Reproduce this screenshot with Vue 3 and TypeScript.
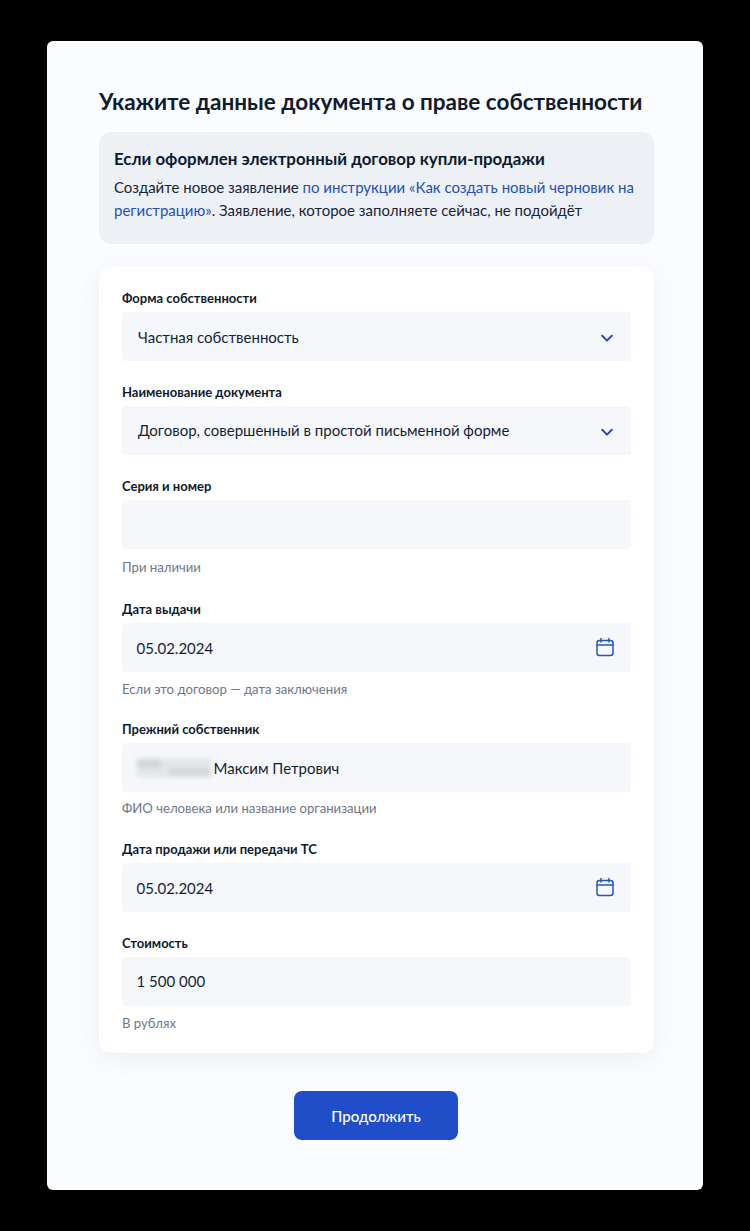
<script setup lang="ts">
interface Field {
  label: string
  value?: string
  hint?: string
  icon?: 'chevron' | 'calendar'
  masked?: boolean
}

const fields: Field[] = [
  { label: 'Форма собственности', value: 'Частная собственность', icon: 'chevron' },
  { label: 'Наименование документа', value: 'Договор, совершенный в простой письменной форме', icon: 'chevron' },
  { label: 'Серия и номер', hint: 'При наличии' },
  { label: 'Дата выдачи', value: '05.02.2024', hint: 'Если это договор — дата заключения', icon: 'calendar' },
  { label: 'Прежний собственник', value: 'Максим Петрович', hint: 'ФИО человека или название организации', masked: true },
  { label: 'Дата продажи или передачи ТС', value: '05.02.2024', icon: 'calendar' },
  { label: 'Стоимость', value: '1 500 000', hint: 'В рублях' },
]
</script>

<template>
  <div class="page">
    <main class="panel">
      <h1 class="title">Укажите данные документа о праве собственности</h1>
      <section class="notice">
        <h2 class="notice-title">Если оформлен электронный договор купли-продажи</h2>
        <p class="notice-text">
          Создайте новое заявление <a class="link">по инструкции «Как создать новый черновик на регистрацию»</a>. Заявление, которое заполняете сейчас, не подойдёт
        </p>
      </section>
      <section class="card">
        <div v-for="f in fields" :key="f.label" class="field">
          <div class="label">{{ f.label }}</div>
          <div class="input" :class="{ select: f.icon === 'chevron' }">
            <span v-if="f.masked" class="mask"></span>
            <span class="value">{{ f.value }}</span>
            <svg v-if="f.icon === 'chevron'" class="chevron" width="14" height="14" viewBox="0 0 14 14" fill="none">
              <path d="M2.2 4.8 7 9.6l4.8-4.8" stroke="#1f4bb4" stroke-width="2" stroke-linecap="round" stroke-linejoin="round" />
            </svg>
            <svg v-if="f.icon === 'calendar'" class="calendar" width="20" height="20" viewBox="0 0 20 20" fill="none">
              <rect x="2" y="3.5" width="16" height="15" rx="2.5" stroke="#2a56b8" stroke-width="1.5" />
              <path d="M2 8h16M6 1.5v3.5M14 1.5v3.5" stroke="#2a56b8" stroke-width="1.5" stroke-linecap="round" />
            </svg>
          </div>
          <div v-if="f.hint" class="hint">{{ f.hint }}</div>
        </div>
      </section>
      <div class="actions">
        <button class="submit" type="button">Продолжить</button>
      </div>
    </main>
  </div>
</template>

<style>
html, body { margin: 0; background: #000; }
</style>

<style scoped>
.page {
  box-sizing: border-box;
  width: 750px;
  height: 1231px;
  padding: 41px 47px;
  background: #000;
  font-family: Lato, "Noto Sans", sans-serif;
  color: #0e1a2e;
}
.panel {
  box-sizing: border-box;
  height: 1149px;
  padding: 45px 49px 0 52px;
  background: #fbfcfe;
  border-radius: 6px;
}
.title {
  margin: 0;
  font-size: 22.5px;
  line-height: 32px;
  font-weight: 700;
  white-space: nowrap;
  color: #0f1b2f;
}
.notice {
  box-sizing: border-box;
  height: 112px;
  margin-top: 14px;
  padding: 16px 15px;
  background: #edf1f6;
  border-radius: 12px;
}
.notice-title {
  margin: 0;
  font-size: 16.85px;
  line-height: 22px;
  font-weight: 700;
}
.notice-text {
  margin: 6px 0 0;
  font-size: 15px;
  line-height: 23px;
  color: #1a2436;
}
.link { color: #2450b8; }
.card {
  box-sizing: border-box;
  height: 786px;
  margin-top: 23px;
  padding: 23px;
  background: #fff;
  border-radius: 12px;
  box-shadow: 0 6px 24px rgba(60, 80, 120, 0.08);
}
.field { margin-bottom: 22.5px; }
.field:nth-child(2) { margin-bottom: 23px; }
.field:nth-child(3) { margin-bottom: 26.5px; }
.field:nth-child(3) .hint { margin-top: 10px; }
.field:nth-child(4) { margin-bottom: 24px; }
.field:nth-child(5) { margin-bottom: 25px; }
.field:nth-child(5) .hint { margin-top: 8px; }
.label {
  height: 22px;
  font-size: 13px;
  line-height: 16px;
  font-weight: 700;
  color: #0e1a2e;
}
.input {
  box-sizing: border-box;
  display: flex;
  align-items: center;
  height: 49px;
  padding: 0 18px 0 14.5px;
  background: #f5f7fa;
  border-radius: 4px;
  font-size: 15px;
  color: #141f33;
}
.select { padding-left: 16px; padding-right: 17px; }
.mask {
  width: 74px;
  height: 18px;
  margin-right: 3px;
  background:
    linear-gradient(#d2d5da, #d2d5da) 0 0 / 24px 9px no-repeat,
    linear-gradient(#d6d8dd, #d6d8dd) 32px 9px / 42px 9px no-repeat,
    #e3e5e9;
  filter: blur(2px);
}
.value { flex: 1; white-space: nowrap; }
.chevron, .calendar { flex: none; }
.chevron { margin-top: 3px; }
.calendar { margin-right: -2px; margin-top: -1px; }
.hint {
  margin-top: 9px;
  font-size: 13.15px;
  line-height: 16px;
  color: #6d7787;
}
.actions {
  display: flex;
  justify-content: center;
  margin-top: 38px;
  padding-right: 1px;
}
.submit {
  width: 164px;
  height: 49px;
  border: 0;
  border-radius: 8px;
  background: #1f4ec8;
  color: #fff;
  font-family: inherit;
  font-size: 15px;
  font-weight: 500;
}
</style>
